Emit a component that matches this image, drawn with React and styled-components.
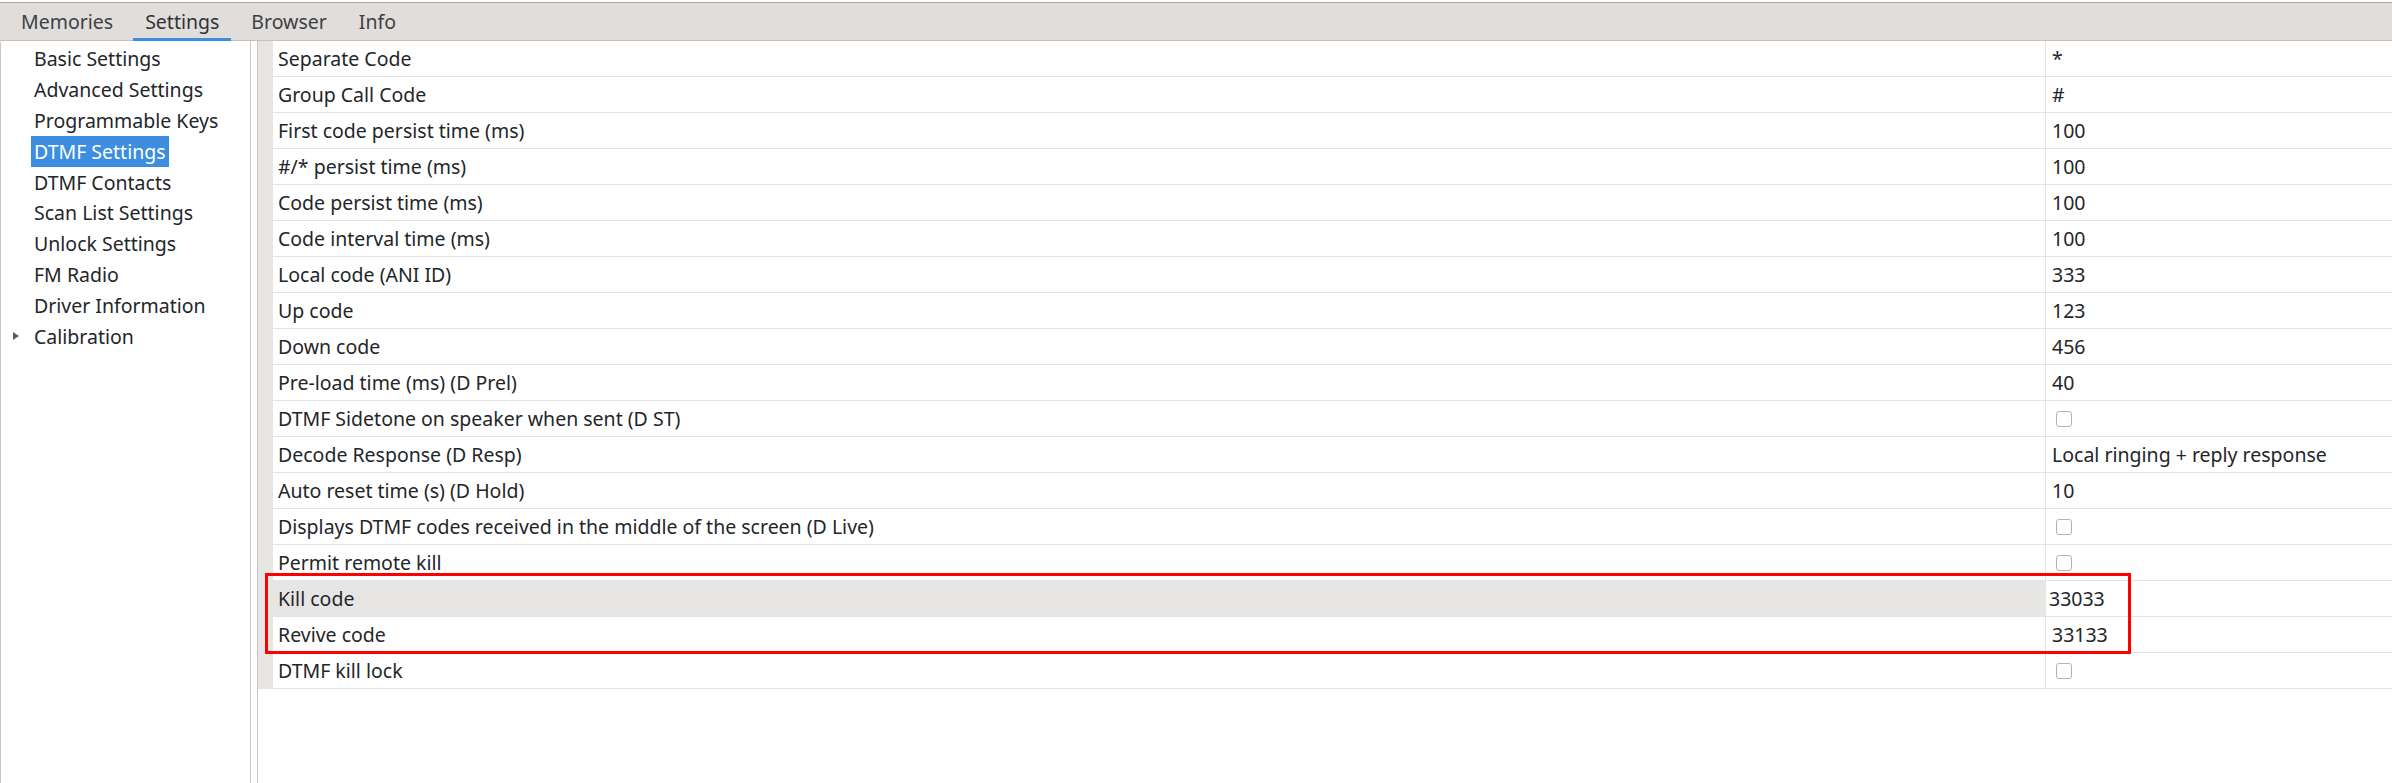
import styled, { createGlobalStyle } from "styled-components";

const GlobalStyle = createGlobalStyle`
  html, body {
    margin: 0;
    padding: 0;
    background: #ffffff;
  }
  * {
    box-sizing: border-box;
  }
`;

const Window = styled.div`
  width: 2392px;
  height: 783px;
  display: flex;
  flex-direction: column;
  background: #ffffff;
  font-family: "Noto Sans", "Open Sans", sans-serif;
  font-size: 19.5px;
  color: #232629;
  overflow: hidden;
  padding-top: 2px;
`;

const TabBar = styled.div`
  display: flex;
  gap: 8px;
  height: 39px;
  padding-left: 9px;
  background: #e0ddda;
  border-top: 1px solid #aaa8a6;
  border-bottom: 1px solid #c4c1bd;
`;

const Tab = styled.div`
  height: 38px;
  padding: 2px 12px 0;
  display: flex;
  align-items: center;
  color: ${({ active }) => (active ? "#2f3336" : "#3d4145")};
  border-bottom: 3px solid ${({ active }) => (active ? "#3d8ee0" : "transparent")};
`;

const Body = styled.div`
  flex: 1;
  display: flex;
  gap: 6px;
  min-height: 0;
`;

const TreePanel = styled.div`
  width: 251px;
  border-left: 1px solid #c9c5c1;
  border-right: 1px solid #c9c5c1;
  border-top-left-radius: 3px;
  padding-top: 2px;
  display: flex;
  flex-direction: column;
`;

const TreeItem = styled.div`
  height: 30.9px;
  display: flex;
  align-items: center;
  position: relative;
  padding-left: 30px;
`;

const TreeLabel = styled.span`
  padding: 0 3px;
  line-height: 31px;
  background: ${({ selected }) => (selected ? "#3d8ee0" : "transparent")};
  color: ${({ selected }) => (selected ? "#ffffff" : "#232629")};
`;

const Expander = styled.span`
  position: absolute;
  left: 12px;
  top: 11px;
  width: 0;
  height: 0;
  border-top: 4px solid transparent;
  border-bottom: 4px solid transparent;
  border-left: 6px solid #5c5f62;
`;

const TablePanel = styled.div`
  flex: 1;
  position: relative;
  border-left: 1px solid #c9c5c1;
`;

const Table = styled.div`
  display: grid;
  grid-template-columns: 15px 1773px 1fr;
`;

const RowHeader = styled.div`
  background: #e8e6e5;
  height: 36px;
`;

const NameCell = styled.div`
  height: 36px;
  display: flex;
  align-items: center;
  padding-left: 5px;
  border-bottom: 1px solid #e5e5e5;
  border-right: 1px solid #e5e5e5;
  background: ${({ current }) => (current ? "#e8e6e5" : "#ffffff")};
`;

const ValueCell = styled.div`
  height: 36px;
  display: flex;
  align-items: center;
  padding-left: ${({ editing }) => (editing ? "3px" : "6px")};
  border-bottom: 1px solid #e5e5e5;
`;

const CheckBox = styled.span`
  display: inline-block;
  width: 16px;
  height: 16px;
  margin-left: 4px;
  border: 1px solid #b8b3ae;
  border-radius: 3px;
  background: #ffffff;
`;

const Highlight = styled.div`
  position: absolute;
  left: 7px;
  top: 532px;
  width: 1866px;
  height: 81px;
  border: 3px solid #ff0000;
  pointer-events: none;
`;

const tabs = ["Memories", "Settings", "Browser", "Info"];

const treeItems = [
  "Basic Settings",
  "Advanced Settings",
  "Programmable Keys",
  "DTMF Settings",
  "DTMF Contacts",
  "Scan List Settings",
  "Unlock Settings",
  "FM Radio",
  "Driver Information",
  "Calibration",
];

const rows = [
  { name: "Separate Code", value: "*" },
  { name: "Group Call Code", value: "#" },
  { name: "First code persist time (ms)", value: "100" },
  { name: "#/* persist time (ms)", value: "100" },
  { name: "Code persist time (ms)", value: "100" },
  { name: "Code interval time (ms)", value: "100" },
  { name: "Local code (ANI ID)", value: "333" },
  { name: "Up code", value: "123" },
  { name: "Down code", value: "456" },
  { name: "Pre-load time (ms) (D Prel)", value: "40" },
  { name: "DTMF Sidetone on speaker when sent (D ST)", check: true },
  { name: "Decode Response (D Resp)", value: "Local ringing + reply response" },
  { name: "Auto reset time (s) (D Hold)", value: "10" },
  { name: "Displays DTMF codes received in the middle of the screen (D Live)", check: true },
  { name: "Permit remote kill", check: true },
  { name: "Kill code", value: "33033", current: true },
  { name: "Revive code", value: "33133" },
  { name: "DTMF kill lock", check: true },
];

export default function App() {
  return (
    <>
      <GlobalStyle />
      <Window>
        <TabBar>
          {tabs.map((t) => (
            <Tab key={t} active={t === "Settings"}>
              {t}
            </Tab>
          ))}
        </TabBar>
        <Body>
          <TreePanel>
            {treeItems.map((item) => (
              <TreeItem key={item}>
                {item === "Calibration" && <Expander />}
                <TreeLabel selected={item === "DTMF Settings"}>{item}</TreeLabel>
              </TreeItem>
            ))}
          </TreePanel>
          <TablePanel>
            <Table>
              {rows.map((r) => (
                <>
                  <RowHeader key={r.name + "h"} />
                  <NameCell key={r.name} current={r.current}>
                    {r.name}
                  </NameCell>
                  <ValueCell key={r.name + "v"} editing={r.current}>
                    {r.check ? <CheckBox /> : r.value}
                  </ValueCell>
                </>
              ))}
            </Table>
            <Highlight />
          </TablePanel>
        </Body>
      </Window>
    </>
  );
}
